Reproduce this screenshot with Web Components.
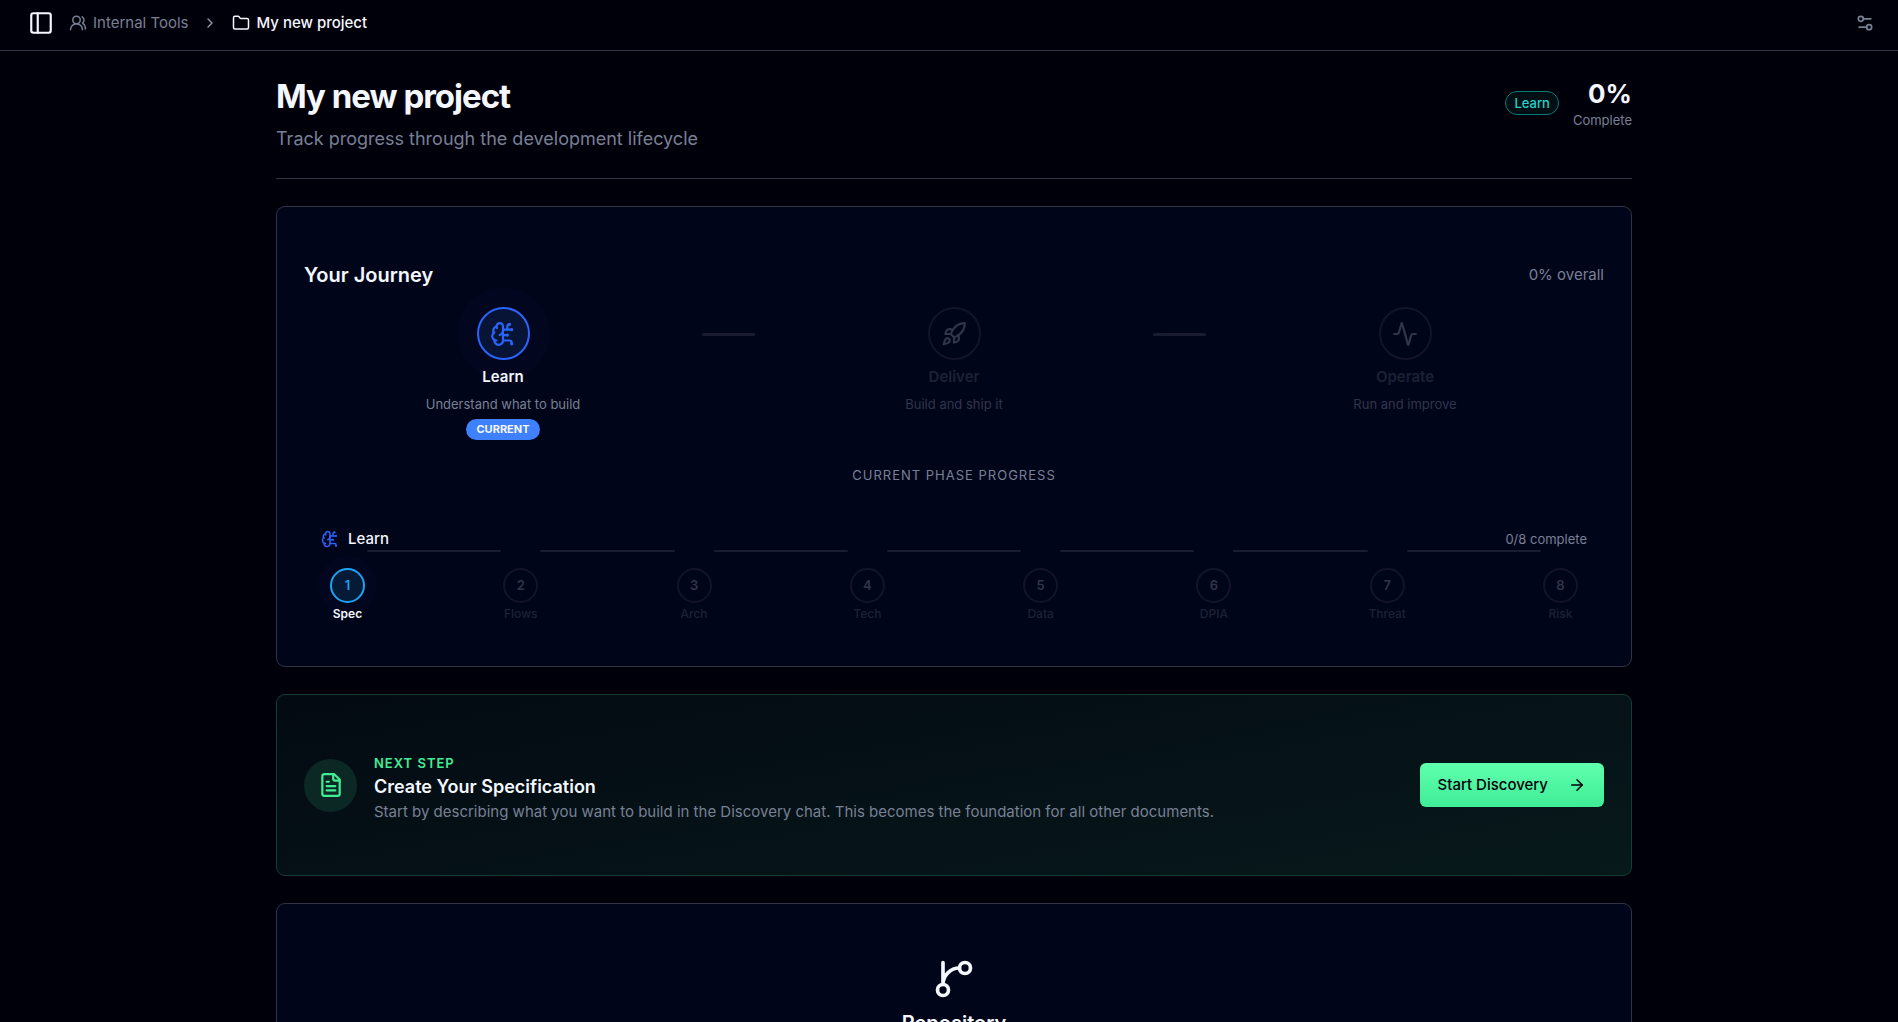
<!DOCTYPE html>
<html lang="en">
<head>
<meta charset="utf-8">
<meta name="viewport" content="width=device-width, initial-scale=1">
<title>My new project</title>
<style>
  :root {
    --bg: #00000b;
    --card: #01051a;
    --line: #313243;
    --text: #f4f7fd;
    --muted: #788094;
    --blue: #2c63fb;
    --sky: #1ca3f2;
    --green: #42ed96;
  }
  body {
    margin: 0;
    background: var(--bg);
    color: var(--text);
    font-family: Inter, "Liberation Sans", sans-serif;
    font-size: 15px;
    line-height: 22px;
  }
</style>
</head>
<body>
<project-app></project-app>

<script>
const ICONS = {
  panel: '<rect width="18" height="18" x="3" y="3" rx="2"/><path d="M9 3v18"/>',
  users: '<path d="M18 21a8 8 0 0 0-16 0"/><circle cx="10" cy="8" r="5"/><path d="M22 20c0-3.37-2-6.5-4-8a5 5 0 0 0-.45-8.3"/>',
  chevron: '<path d="m9 18 6-6-6-6"/>',
  folder: '<path d="M20 20a2 2 0 0 0 2-2V8a2 2 0 0 0-2-2h-7.9a2 2 0 0 1-1.69-.9L9.6 3.9A2 2 0 0 0 7.93 3H4a2 2 0 0 0-2 2v13a2 2 0 0 0 2 2Z"/>',
  settings: '<path d="M14 17H5"/><path d="M19 7h-9"/><circle cx="17" cy="17" r="3"/><circle cx="7" cy="7" r="3"/>',
  brain: '<path d="M12 5a3 3 0 1 0-5.997.125 4 4 0 0 0-2.526 5.77 4 4 0 0 0 .556 6.588A4 4 0 1 0 12 18Z"/><path d="M9 13a4.5 4.5 0 0 0 3-4"/><path d="M6.003 5.125A3 3 0 0 0 6.401 6.5"/><path d="M3.477 10.896a4 4 0 0 1 .585-.396"/><path d="M6 18a4 4 0 0 1-1.967-.516"/><path d="M12 13h4"/><path d="M12 18h6a2 2 0 0 1 2 2v1"/><path d="M12 8h8"/><path d="M16 8V5a2 2 0 0 1 2-2"/><circle cx="16" cy="13" r=".5"/><circle cx="18" cy="3" r=".5"/><circle cx="20" cy="21" r=".5"/><circle cx="20" cy="8" r=".5"/>',
  rocket: '<path d="M4.5 16.5c-1.5 1.26-2 5-2 5s3.74-.5 5-2c.71-.84.7-2.13-.09-2.91a2.18 2.18 0 0 0-2.91-.09z"/><path d="m12 15-3-3a22 22 0 0 1 2-3.95A12.88 12.88 0 0 1 22 2c0 2.72-.78 7.5-6 11a22.35 22.35 0 0 1-4 2z"/><path d="M9 12H4s.55-3.03 2-4c1.62-1.08 5 0 5 0"/><path d="M12 15v5s3.03-.55 4-2c1.08-1.62 0-5 0-5"/>',
  activity: '<path d="M22 12h-2.48a2 2 0 0 0-1.93 1.46l-2.35 8.36a.25.25 0 0 1-.48 0L9.24 2.18a.25.25 0 0 0-.48 0l-2.35 8.36A2 2 0 0 1 4.49 12H2"/>',
  file: '<path d="M15 2H6a2 2 0 0 0-2 2v16a2 2 0 0 0 2 2h12a2 2 0 0 0 2-2V7Z"/><path d="M14 2v4a2 2 0 0 0 2 2h4"/><path d="M10 9H8"/><path d="M16 13H8"/><path d="M16 17H8"/>',
  arrow: '<path d="M5 12h14"/><path d="m12 5 7 7-7 7"/>',
  branch: '<path d="M15 6a9 9 0 0 0-9 9V3"/><circle cx="18" cy="6" r="3"/><circle cx="6" cy="18" r="3"/>',
};

class UiIcon extends HTMLElement {
  constructor() {
    super();
    this.attachShadow({ mode: 'open' });
  }

  connectedCallback() {
    this.shadowRoot.innerHTML = `
      <style>
        :host {
          display: block;
          flex: none;
          width: var(--size, 18px);
          height: var(--size, 18px);
        }
        svg {
          display: block;
          width: 100%;
          height: 100%;
          fill: none;
          stroke: currentColor;
          stroke-width: 2;
          stroke-linecap: round;
          stroke-linejoin: round;
        }
      </style>
      <svg viewBox="0 0 24 24" aria-hidden="true">${ICONS[this.getAttribute('name')]}</svg>
    `;
  }
}

class TopBar extends HTMLElement {
  constructor() {
    super();
    this.attachShadow({ mode: 'open' });
  }

  connectedCallback() {
    this.shadowRoot.innerHTML = `
      <style>
        :host {
          display: block;
          flex: none;
          border-bottom: 1px solid var(--line);
        }
        header {
          display: flex;
          align-items: center;
          height: 46px;
          padding: 0 23px 4px 28px;
        }
        button {
          display: block;
          padding: 0;
          border: 0;
          background: none;
          color: var(--text);
          cursor: pointer;
        }
        .toggle { --size: 26px; }
        .settings { margin-left: auto; color: var(--muted); }
        .settings ui-icon { --size: 20px; }
        nav {
          display: flex;
          align-items: center;
          gap: 14px;
          margin-left: 15px;
          color: var(--muted);
        }
        a {
          display: flex;
          align-items: center;
          gap: 6px;
          color: inherit;
          text-decoration: none;
        }
        a[aria-current] { color: var(--text); font-weight: 500; }
        .sep { --size: 16px; color: #9298a8; }
      </style>
      <header>
        <button class="toggle" type="button" aria-label="Toggle sidebar"><ui-icon name="panel"></ui-icon></button>
        <nav aria-label="Breadcrumb">
          <a href="#team"><ui-icon name="users"></ui-icon>Internal Tools</a>
          <ui-icon class="sep" name="chevron"></ui-icon>
          <a href="#project" aria-current="page"><ui-icon name="folder"></ui-icon>My new project</a>
        </nav>
        <button class="settings" type="button" aria-label="Settings"><ui-icon name="settings"></ui-icon></button>
      </header>
    `;
  }
}

class PageHeading extends HTMLElement {
  constructor() {
    super();
    this.attachShadow({ mode: 'open' });
  }

  connectedCallback() {
    this.shadowRoot.innerHTML = `
      <style>
        :host {
          display: flex;
          justify-content: space-between;
          align-items: flex-start;
          padding-bottom: 26px;
          border-bottom: 1px solid var(--line);
        }
        h1 {
          margin: 0 0 11px;
          font-size: 33px;
          line-height: 38px;
          font-weight: 700;
          letter-spacing: -1px;
        }
        p {
          margin: 0;
          color: var(--muted);
          font-size: 18px;
          line-height: 26px;
        }
        .status {
          display: flex;
          align-items: center;
          gap: 14px;
        }
        .phase {
          padding: 0 8px;
          border: 1px solid #087a75;
          border-radius: 12px;
          background: #010f14;
          color: #22d3ca;
          font-size: 13px;
          font-weight: 500;
        }
        .total { text-align: right; }
        .value {
          display: block;
          font-size: 26px;
          line-height: 34px;
          font-weight: 700;
        }
        .note {
          display: block;
          color: var(--muted);
          font-size: 13px;
          line-height: 18px;
        }
      </style>
      <div>
        <h1>My new project</h1>
        <p>Track progress through the development lifecycle</p>
      </div>
      <div class="status">
        <span class="phase">Learn</span>
        <div class="total">
          <span class="value">0%</span>
          <span class="note">Complete</span>
        </div>
      </div>
    `;
  }
}

class UiCard extends HTMLElement {
  constructor() {
    super();
    this.attachShadow({ mode: 'open' });
  }

  connectedCallback() {
    this.shadowRoot.innerHTML = `
      <style>
        :host {
          display: block;
          padding: 53px 27px 43px;
          border: 1px solid var(--line);
          border-radius: 9px;
          background: var(--card);
        }
        :host([tone="green"]) {
          padding: 51px 27px;
          border-color: #153d34;
          background: linear-gradient(170deg, #030a12, #07191b);
        }
      </style>
      <slot></slot>
    `;
  }
}

class JourneyPhase extends HTMLElement {
  constructor() {
    super();
    this.attachShadow({ mode: 'open' });
  }

  connectedCallback() {
    const current = this.hasAttribute('current');
    this.shadowRoot.innerHTML = `
      <style>
        :host {
          display: flex;
          flex-direction: column;
          align-items: center;
          color: #30354a;
        }
        .ring {
          display: grid;
          place-items: center;
          box-sizing: border-box;
          width: 53px;
          height: 53px;
          border: 2px solid #13142a;
          border-radius: 50%;
        }
        .ring ui-icon { --size: 26px; }
        .name {
          margin-top: 6px;
          color: #1e2136;
          font-weight: 600;
        }
        .hint {
          margin-top: 7px;
          font-size: 13px;
          line-height: 18px;
        }
        .badge {
          margin-top: 6px;
          padding: 0 10px;
          border-radius: 11px;
          background: #3f80fc;
          color: var(--text);
          font-size: 11px;
          line-height: 21px;
          font-weight: 700;
        }
        :host([current]) { color: var(--muted); }
        :host([current]) .ring {
          border-color: var(--blue);
          background: #081435;
          box-shadow: 0 0 0 20px #02071f;
          color: var(--blue);
        }
        :host([current]) .name { color: var(--text); }
      </style>
      <div class="ring"><ui-icon name="${this.getAttribute('icon')}"></ui-icon></div>
      <span class="name">${this.getAttribute('label')}</span>
      <span class="hint"><slot></slot></span>
      ${current ? '<span class="badge">CURRENT</span>' : ''}
    `;
  }
}

class StepTrack extends HTMLElement {
  constructor() {
    super();
    this.attachShadow({ mode: 'open' });
  }

  connectedCallback() {
    const steps = this.getAttribute('steps').split(',');
    const items = steps.map((name, i) => `
      <li${i === 0 ? ' class="active" aria-current="step"' : ''}>
        <span class="dot">${i + 1}</span>
        <span>${name}</span>
      </li>
    `);
    this.shadowRoot.innerHTML = `
      <style>
        :host { display: block; }
        ol {
          display: flex;
          align-items: flex-start;
          margin: 0;
          padding: 0;
          list-style: none;
        }
        li {
          display: flex;
          flex-direction: column;
          align-items: center;
          gap: 2px;
          width: 53px;
          padding-top: 18px;
          color: #1e2136;
          font-size: 12px;
          line-height: 18px;
          font-weight: 500;
        }
        .line {
          flex: 1;
          width: auto;
          height: 2px;
          margin: 0 -7px;
          padding: 0;
          border-radius: 1px;
          background: #1a1d31;
        }
        .dot {
          box-sizing: border-box;
          width: 35px;
          height: 35px;
          border: 2px solid #13142a;
          border-radius: 50%;
          color: #30354a;
          font-size: 13px;
          line-height: 30px;
          font-weight: 600;
          text-align: center;
        }
        .active { color: var(--text); font-weight: 600; }
        .active .dot {
          border-color: var(--sky);
          background: #051a36;
          box-shadow: 0 0 0 12px #02071f;
          color: var(--sky);
        }
      </style>
      <ol>${items.join('<li class="line" role="presentation"></li>')}</ol>
    `;
  }
}

class JourneyOverview extends HTMLElement {
  constructor() {
    super();
    this.attachShadow({ mode: 'open' });
  }

  connectedCallback() {
    this.shadowRoot.innerHTML = `
      <style>
        :host { display: block; }
        .row {
          display: flex;
          justify-content: space-between;
          align-items: center;
        }
        h2 {
          margin: 0;
          font-size: 20px;
          line-height: 30px;
          font-weight: 600;
        }
        .muted { color: var(--muted); }
        .phases {
          display: grid;
          grid-template-columns: 1fr 53px 1fr 53px 1fr;
          margin-top: 17px;
        }
        .link {
          height: 3px;
          margin-top: 26px;
          border-radius: 2px;
          background: #1a1d31;
        }
        h3 {
          margin: 25px 0 0;
          color: var(--muted);
          font-size: 13px;
          line-height: 20px;
          font-weight: 400;
          letter-spacing: 1px;
          text-align: center;
        }
        .progress { padding: 43px 17px 0; }
        .title {
          display: flex;
          align-items: center;
          gap: 9px;
          font-weight: 500;
        }
        .title ui-icon { color: var(--blue); }
        .small { font-size: 13px; }
      </style>
      <div class="row">
        <h2>Your Journey</h2>
        <span class="muted">0% overall</span>
      </div>
      <div class="phases">
        <journey-phase icon="brain" label="Learn" current>Understand what to build</journey-phase>
        <div class="link"></div>
        <journey-phase icon="rocket" label="Deliver">Build and ship it</journey-phase>
        <div class="link"></div>
        <journey-phase icon="activity" label="Operate">Run and improve</journey-phase>
      </div>
      <h3>CURRENT PHASE PROGRESS</h3>
      <div class="progress">
        <div class="row">
          <span class="title"><ui-icon name="brain"></ui-icon>Learn</span>
          <span class="muted small">0/8 complete</span>
        </div>
        <step-track steps="Spec,Flows,Arch,Tech,Data,DPIA,Threat,Risk"></step-track>
      </div>
    `;
  }
}

class NextStep extends HTMLElement {
  constructor() {
    super();
    this.attachShadow({ mode: 'open' });
  }

  connectedCallback() {
    this.shadowRoot.innerHTML = `
      <style>
        :host {
          display: flex;
          align-items: center;
          gap: 17px;
        }
        .icon {
          --size: 26px;
          display: grid;
          place-items: center;
          flex: none;
          width: 53px;
          height: 53px;
          border-radius: 50%;
          background: #0c2824;
          color: var(--green);
        }
        .text { flex: 1; padding-top: 8px; }
        .eyebrow {
          display: block;
          color: var(--green);
          font-size: 13px;
          line-height: 18px;
          font-weight: 600;
          letter-spacing: 1px;
        }
        h2 {
          margin: 2px 0 0;
          font-size: 18px;
          line-height: 26px;
          font-weight: 600;
        }
        p {
          margin: 0;
          color: var(--muted);
          line-height: 24px;
        }
        button {
          display: flex;
          align-items: center;
          gap: 20px;
          height: 44px;
          padding: 0 18px;
          border: 0;
          border-radius: 6px;
          background: linear-gradient(#5fffad, #40ed97);
          color: #00000b;
          font: inherit;
          font-weight: 500;
          cursor: pointer;
        }
      </style>
      <div class="icon"><ui-icon name="file"></ui-icon></div>
      <div class="text">
        <span class="eyebrow">NEXT STEP</span>
        <h2>Create Your Specification</h2>
        <p>Start by describing what you want to build in the Discovery chat. This becomes the foundation for all other documents.</p>
      </div>
      <button type="button">Start Discovery <ui-icon name="arrow"></ui-icon></button>
    `;
  }
}

class RepositoryPanel extends HTMLElement {
  constructor() {
    super();
    this.attachShadow({ mode: 'open' });
  }

  connectedCallback() {
    this.shadowRoot.innerHTML = `
      <style>
        :host {
          display: flex;
          flex-direction: column;
          align-items: center;
          gap: 8px;
        }
        ui-icon { --size: 44px; }
        h2 {
          margin: 0;
          font-size: 20px;
          line-height: 28px;
          font-weight: 600;
        }
      </style>
      <ui-icon name="branch"></ui-icon>
      <h2>Repository</h2>
    `;
  }
}

class ProjectApp extends HTMLElement {
  constructor() {
    super();
    this.attachShadow({ mode: 'open' });
  }

  connectedCallback() {
    this.shadowRoot.innerHTML = `
      <style>
        :host {
          display: flex;
          flex-direction: column;
          height: 100vh;
        }
        main {
          flex: 1;
          min-height: 0;
          overflow-y: auto;
          scrollbar-width: none;
          padding: 26px 26px 26px 36px;
        }
        .content {
          display: flex;
          flex-direction: column;
          gap: 27px;
          max-width: 1356px;
          margin: 0 auto;
        }
      </style>
      <top-bar></top-bar>
      <main>
        <div class="content">
          <page-heading></page-heading>
          <ui-card><journey-overview></journey-overview></ui-card>
          <ui-card tone="green"><next-step></next-step></ui-card>
          <ui-card><repository-panel></repository-panel></ui-card>
        </div>
      </main>
    `;
  }
}

customElements.define('ui-icon', UiIcon);
customElements.define('top-bar', TopBar);
customElements.define('page-heading', PageHeading);
customElements.define('ui-card', UiCard);
customElements.define('journey-phase', JourneyPhase);
customElements.define('step-track', StepTrack);
customElements.define('journey-overview', JourneyOverview);
customElements.define('next-step', NextStep);
customElements.define('repository-panel', RepositoryPanel);
customElements.define('project-app', ProjectApp);
</script>
</body>
</html>
